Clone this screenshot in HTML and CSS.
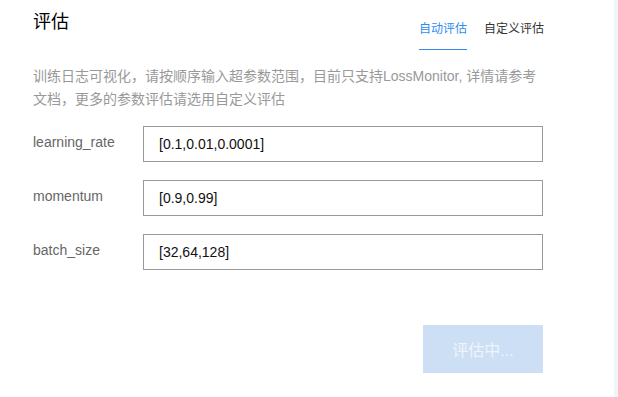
FILE: index.html
```html
<!DOCTYPE html>
<html lang="zh-CN">
<head>
<meta charset="utf-8">
<link rel="stylesheet" href="styles.css">
</head>
<body>
<div class="page">
  <main class="panel">
    <header class="header">
      <h1 class="title">评估</h1>
      <nav class="tabs">
        <span class="tab tab-active">自动评估</span>
        <span class="tab">自定义评估</span>
      </nav>
    </header>
    <p class="desc">训练日志可视化，请按顺序输入超参数范围，目前只支持LossMonitor, 详情请参考文档，更多的参数评估请选用自定义评估</p>
    <div class="form">
      <div class="row">
        <label class="label">learning_rate</label>
        <div class="input">[0.1,0.01,0.0001]</div>
      </div>
      <div class="row">
        <label class="label">momentum</label>
        <div class="input">[0.9,0.99]</div>
      </div>
      <div class="row">
        <label class="label">batch_size</label>
        <div class="input">[32,64,128]</div>
      </div>
    </div>
    <div class="actions">
      <button class="btn">评估中...</button>
    </div>
  </main>
  <aside class="strip"></aside>
</div>
</body>
</html>
```

FILE: styles.css
```css
* { box-sizing: border-box; }
html, body {
  margin: 0;
  padding: 0;
  height: 100%;
}
body {
  font-family: "Liberation Sans", "Noto Sans CJK SC", sans-serif;
  background: #fff;
  color: #333;
}
.page {
  display: flex;
  width: 618px;
  height: 397px;
}
.panel {
  width: 614px;
  padding-left: 33px;
  background: #fff;
}
.strip {
  width: 4px;
  background: #f3f4f8;
}
.header {
  width: 511px;
  display: flex;
  justify-content: space-between;
  align-items: flex-start;
}
.title {
  margin: 0;
  padding-top: 10px;
  font-size: 18px;
  line-height: 24px;
  font-weight: normal;
  color: #000;
}
.tabs {
  display: flex;
  gap: 17px;
  padding-top: 19px;
}
.tab {
  font-size: 12px;
  line-height: 20px;
  padding-bottom: 10px;
  border-bottom: 1px solid transparent;
  color: #333;
}
.tab-active {
  color: #2f8bf0;
  border-bottom-color: #2f8bf0;
}
.desc {
  width: 510px;
  margin: 15px 0 0;
  font-size: 14px;
  line-height: 23px;
  color: #999;
}
.form {
  margin-top: 15px;
  display: flex;
  flex-direction: column;
  gap: 18px;
}
.row {
  display: flex;
  align-items: flex-start;
}
.label {
  width: 110px;
  padding-top: 6px;
  font-size: 14px;
  line-height: 20px;
  color: #666;
}
.input {
  width: 400px;
  height: 36px;
  border: 1px solid #999;
  padding-left: 15px;
  display: flex;
  align-items: center;
  font-size: 14px;
  color: #111;
}
.actions {
  width: 510px;
  margin-top: 55px;
  display: flex;
  justify-content: flex-end;
}
.btn {
  width: 120px;
  height: 48px;
  border: none;
  background: #cddff5;
  color: #eef4fc;
  font-family: "Liberation Sans", "Noto Sans CJK SC", sans-serif;
  font-size: 16px;
  padding: 0;
}
```
